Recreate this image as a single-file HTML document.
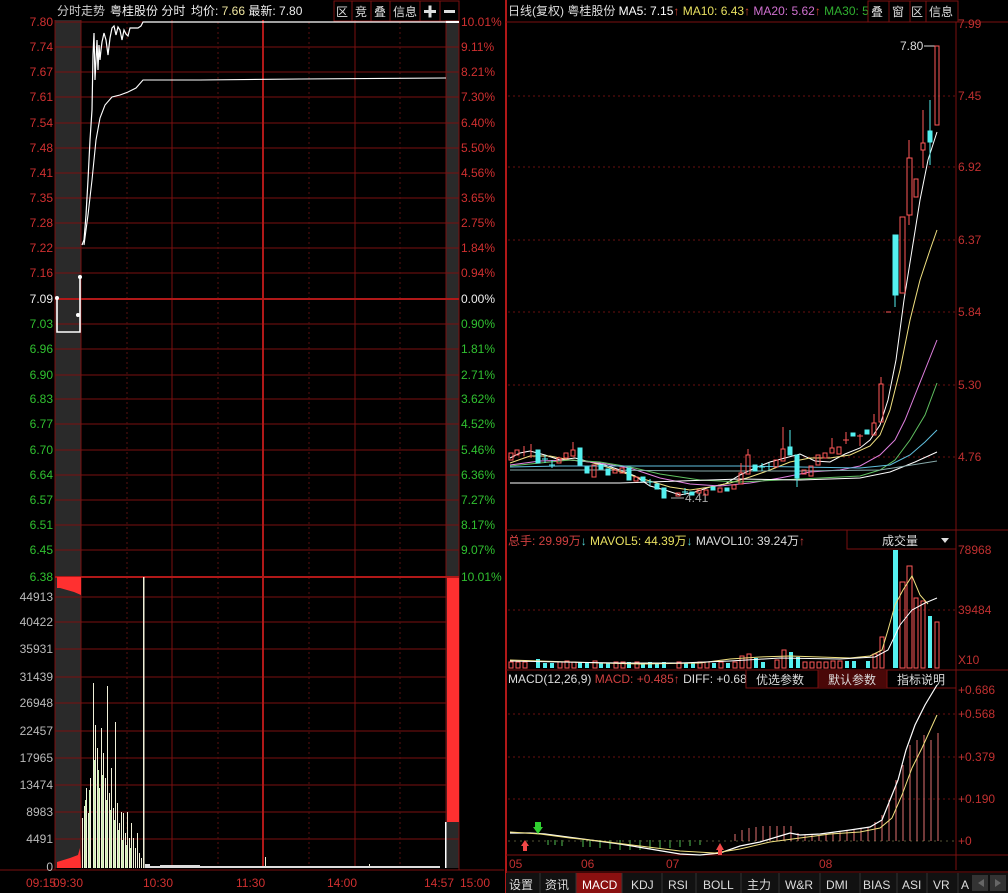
<!DOCTYPE html>
<html><head><meta charset="utf-8"><style>
html,body{margin:0;padding:0;background:#000;width:1008px;height:893px;overflow:hidden}
svg{display:block}
text{font-family:"Liberation Sans","Noto Sans CJK SC",sans-serif;font-size:12px}
</style></head><body>
<svg width="1008" height="893" viewBox="0 0 1008 893" xmlns="http://www.w3.org/2000/svg">
<rect width="1008" height="893" fill="#000"/>
<rect x="55" y="20" width="26" height="848" fill="#2a2a2a"/>
<rect x="446" y="20" width="13" height="848" fill="#2a2a2a"/>
<g stroke="#7a1010" stroke-width="1">
<line x1="55" y1="47" x2="459" y2="47"/><line x1="55" y1="72" x2="459" y2="72"/><line x1="55" y1="97" x2="459" y2="97"/><line x1="55" y1="123" x2="459" y2="123"/><line x1="55" y1="148" x2="459" y2="148"/><line x1="55" y1="173" x2="459" y2="173"/><line x1="55" y1="198" x2="459" y2="198"/><line x1="55" y1="223" x2="459" y2="223"/><line x1="55" y1="248" x2="459" y2="248"/><line x1="55" y1="273" x2="459" y2="273"/>
<line x1="55" y1="324" x2="459" y2="324"/><line x1="55" y1="349" x2="459" y2="349"/><line x1="55" y1="375" x2="459" y2="375"/><line x1="55" y1="399" x2="459" y2="399"/><line x1="55" y1="424" x2="459" y2="424"/><line x1="55" y1="450" x2="459" y2="450"/><line x1="55" y1="475" x2="459" y2="475"/><line x1="55" y1="500" x2="459" y2="500"/><line x1="55" y1="525" x2="459" y2="525"/><line x1="55" y1="550" x2="459" y2="550"/>
<line x1="55" y1="597" x2="459" y2="597"/><line x1="55" y1="622" x2="459" y2="622"/><line x1="55" y1="649" x2="459" y2="649"/><line x1="55" y1="677" x2="459" y2="677"/><line x1="55" y1="703" x2="459" y2="703"/><line x1="55" y1="731" x2="459" y2="731"/><line x1="55" y1="758" x2="459" y2="758"/><line x1="55" y1="785" x2="459" y2="785"/><line x1="55" y1="812" x2="459" y2="812"/><line x1="55" y1="839" x2="459" y2="839"/>
<line x1="81" y1="20" x2="81" y2="868"/><line x1="172" y1="20" x2="172" y2="868"/><line x1="355" y1="20" x2="355" y2="868"/><line x1="446" y1="20" x2="446" y2="868"/>
<line x1="55" y1="20" x2="55" y2="870"/><line x1="459" y1="20" x2="459" y2="870"/>
</g>
<g stroke="#5a1010" stroke-dasharray="2,3"><line x1="127" y1="22" x2="127" y2="868"/><line x1="218" y1="22" x2="218" y2="868"/><line x1="309" y1="22" x2="309" y2="868"/><line x1="400" y1="22" x2="400" y2="868"/></g>
<g stroke="#b01818" stroke-width="2"><line x1="55" y1="299" x2="459" y2="299"/><line x1="55" y1="577" x2="459" y2="577"/><line x1="263" y1="20" x2="263" y2="868"/></g>
<line x1="55" y1="22" x2="459" y2="22" stroke="#7a1010"/>
<line x1="0" y1="870" x2="504" y2="870" stroke="#7a1010"/>
<text x="57" y="15" fill="#ccc" font-size="12.5">分时走势</text>
<text x="110" y="15" fill="#eee" font-size="12.5">粤桂股份 分时</text>
<text x="191" y="15" fill="#eee" font-size="12.5">均价: <tspan fill="#f0e6a0">7.66</tspan> 最新: 7.80</text>
<g stroke="#7a1010" fill="none"><rect x="334" y="1" width="125" height="20"/><line x1="352" y1="1" x2="352" y2="21"/><line x1="371" y1="1" x2="371" y2="21"/><line x1="390" y1="1" x2="390" y2="21"/><line x1="420" y1="1" x2="420" y2="21"/><line x1="440" y1="1" x2="440" y2="21"/></g>
<text x="336" y="16" fill="#ddd" font-size="13">区</text><text x="355" y="16" fill="#ddd" font-size="13">竞</text><text x="374" y="16" fill="#ddd" font-size="13">叠</text><text x="393" y="16" fill="#ddd" font-size="13">信息</text>
<rect x="424" y="10" width="12" height="3" fill="#ddd"/><rect x="428.5" y="5.5" width="3" height="12" fill="#ddd"/><rect x="444" y="10" width="11" height="3" fill="#ddd"/>
<g text-anchor="end" fill="#d03030">
<text x="53" y="26">7.80</text><text x="53" y="51">7.74</text><text x="53" y="76">7.67</text><text x="53" y="101">7.61</text><text x="53" y="127">7.54</text><text x="53" y="152">7.48</text><text x="53" y="177">7.41</text><text x="53" y="202">7.35</text><text x="53" y="227">7.28</text><text x="53" y="252">7.22</text><text x="53" y="277">7.16</text></g>
<text x="53" y="303" text-anchor="end" fill="#eee">7.09</text>
<g text-anchor="end" fill="#30c030">
<text x="53" y="328">7.03</text><text x="53" y="353">6.96</text><text x="53" y="379">6.90</text><text x="53" y="403">6.83</text><text x="53" y="428">6.77</text><text x="53" y="454">6.70</text><text x="53" y="479">6.64</text><text x="53" y="504">6.57</text><text x="53" y="529">6.51</text><text x="53" y="554">6.45</text><text x="53" y="581">6.38</text></g>
<g fill="#d03030"><text x="461" y="26">10.01%</text><text x="461" y="51">9.11%</text><text x="461" y="76">8.21%</text><text x="461" y="101">7.30%</text><text x="461" y="127">6.40%</text><text x="461" y="152">5.50%</text><text x="461" y="177">4.56%</text><text x="461" y="202">3.65%</text><text x="461" y="227">2.75%</text><text x="461" y="252">1.84%</text><text x="461" y="277">0.94%</text></g>
<text x="461" y="303" fill="#eee">0.00%</text>
<g fill="#30c030"><text x="461" y="328">0.90%</text><text x="461" y="353">1.81%</text><text x="461" y="379">2.71%</text><text x="461" y="403">3.62%</text><text x="461" y="428">4.52%</text><text x="461" y="454">5.46%</text><text x="461" y="479">6.36%</text><text x="461" y="504">7.27%</text><text x="461" y="529">8.17%</text><text x="461" y="554">9.07%</text><text x="461" y="581">10.01%</text></g>
<g text-anchor="end" fill="#bbb"><text x="53" y="601">44913</text><text x="53" y="626">40422</text><text x="53" y="653">35931</text><text x="53" y="681">31439</text><text x="53" y="707">26948</text><text x="53" y="735">22457</text><text x="53" y="762">17965</text><text x="53" y="789">13474</text><text x="53" y="816">8983</text><text x="53" y="843">4491</text><text x="53" y="871">0</text></g>
<g fill="#d03030" font-size="12"><text x="26" y="887">09:15</text><text x="53" y="887">09:30</text><text x="143" y="887">10:30</text><text x="236" y="887">11:30</text><text x="327" y="887">14:00</text><text x="424" y="887">14:57</text><text x="460" y="887">15:00</text></g>
<polyline fill="none" stroke="#fff" stroke-width="1.6" points="57,298 57,332 80,332 80,277 78,277"/>
<circle cx="57" cy="298" r="2" fill="#fff"/><circle cx="78" cy="315" r="2" fill="#fff"/><circle cx="80" cy="277" r="2" fill="#fff"/>
<polyline fill="none" stroke="#fff" stroke-width="1.2" points="82,245 84,240 86,215 88,180 90,140 92,110 93,55 94,33 95,80 96,60 97,40 98,70 99,45 100,60 101,50 102,42 104,33 106,40 108,55 110,38 112,28 114,26 116,35 118,27 120,30 122,40 124,30 126,34 128,36 130,28 134,28 138,28 141,26 143,22 446,22"/>
<polyline fill="none" stroke="#fff" stroke-width="1.1" points="84,245 88,215 92,180 96,140 100,118 105,105 112,97 120,95 128,92 136,88 143,80 200,80 300,79 446,78"/>
<rect x="446" y="21" width="13" height="2" fill="#fff"/>
<path d="M57,577 L81,577 L81,595 L74,592 L60,588 L57,588Z" fill="#ff3030"/>
<path d="M57,868 L57,862 L70,858 L78,855 L80,848 L81,868Z" fill="#ff3030"/>
<rect x="447" y="578" width="12" height="244" fill="#ff3030"/>
<rect x="445" y="822" width="1.5" height="46" fill="#fff"/>
<g fill="#f0f0d8">
<rect x="82" y="818" width="1" height="50"/><rect x="84" y="806" width="1" height="62"/><rect x="86" y="788" width="1" height="80"/><rect x="88" y="813" width="1" height="55"/><rect x="90" y="778" width="1" height="90"/><rect x="93" y="683" width="1" height="185"/><rect x="95" y="725" width="1" height="143"/><rect x="97" y="748" width="1" height="120"/><rect x="99" y="788" width="1" height="80"/><rect x="101" y="728" width="1" height="140"/><rect x="103" y="753" width="1" height="115"/><rect x="105" y="778" width="1" height="90"/><rect x="107" y="686" width="1" height="182"/><rect x="109" y="793" width="1" height="75"/><rect x="111" y="768" width="1" height="100"/><rect x="113" y="808" width="1" height="60"/><rect x="115" y="722" width="1" height="146"/><rect x="117" y="803" width="1" height="65"/><rect x="119" y="823" width="1" height="45"/><rect x="121" y="812" width="1" height="56"/><rect x="123" y="813" width="1" height="55"/><rect x="125" y="833" width="1" height="35"/><rect x="127" y="812" width="1" height="56"/><rect x="129" y="838" width="1" height="30"/><rect x="131" y="823" width="1" height="45"/><rect x="133" y="838" width="1" height="30"/><rect x="135" y="848" width="1" height="20"/><rect x="137" y="833" width="1" height="35"/><rect x="139" y="853" width="1" height="15"/><rect x="141" y="858" width="1" height="10"/><rect x="143" y="577" width="1.5" height="291"/>
<rect x="265" y="857" width="1" height="11"/><rect x="369" y="864" width="1" height="4"/>
</g>
<g fill="#c8f0b0"><rect x="85" y="800" width="1" height="68"/><rect x="89" y="790" width="1" height="78"/><rect x="94" y="760" width="1" height="108"/><rect x="98" y="770" width="1" height="98"/><rect x="102" y="775" width="1" height="93"/><rect x="106" y="800" width="1" height="68"/><rect x="110" y="810" width="1" height="58"/><rect x="114" y="820" width="1" height="48"/><rect x="118" y="830" width="1" height="38"/><rect x="122" y="840" width="1" height="28"/><rect x="126" y="845" width="1" height="23"/><rect x="130" y="848" width="1" height="20"/></g>
<path d="M145,868 V864 H150 V866 H160 V865 H200 V866 H260 V866 H300 V866 H440 V868 Z" fill="#ddd"/>
<line x1="506" y1="0" x2="506" y2="893" stroke="#b01818" stroke-width="2"/>
<line x1="956" y1="22" x2="956" y2="870" stroke="#7a1010"/>
<line x1="506" y1="22" x2="1008" y2="22" stroke="#7a1010"/>
<g stroke="#6a1010" stroke-dasharray="2,3"><line x1="508" y1="96" x2="956" y2="96"/><line x1="508" y1="167" x2="956" y2="167"/><line x1="508" y1="240" x2="956" y2="240"/><line x1="508" y1="312" x2="956" y2="312"/><line x1="508" y1="385" x2="956" y2="385"/><line x1="508" y1="457" x2="956" y2="457"/><line x1="508" y1="610" x2="956" y2="610"/><line x1="508" y1="714" x2="956" y2="714"/><line x1="508" y1="757" x2="956" y2="757"/><line x1="508" y1="799" x2="956" y2="799"/></g>
<g stroke="#7a1010"><line x1="506" y1="530" x2="1008" y2="530"/><line x1="506" y1="670" x2="1008" y2="670"/><line x1="506" y1="855" x2="1008" y2="855"/><line x1="506" y1="872" x2="1008" y2="872"/></g>
<text x="508" y="15" fill="#ddd" font-size="12.5">日线(复权) 粤桂股份 <tspan fill="#fff">MA5: 7.15</tspan><tspan fill="#d04030">↑</tspan><tspan fill="#e8e060"> MA10: 6.43</tspan><tspan fill="#d04030">↑</tspan><tspan fill="#d070d0"> MA20: 5.62</tspan><tspan fill="#d04030">↑</tspan><tspan fill="#30b030"> MA30: 5</tspan></text>
<g stroke="#7a1010" fill="none"><rect x="868" y="1" width="90" height="21"/><line x1="889" y1="1" x2="889" y2="22"/><line x1="910" y1="1" x2="910" y2="22"/><line x1="926" y1="1" x2="926" y2="22"/></g>
<rect x="866" y="0" width="92" height="22" fill="#000" opacity="0"/>
<text x="871" y="16" fill="#ddd" font-size="13">叠</text><text x="892" y="16" fill="#ddd" font-size="13">窗</text><text x="911" y="16" fill="#ddd" font-size="13">区</text><text x="929" y="16" fill="#ddd" font-size="13">信息</text>
<g fill="#c03030"><text x="958" y="28">7.99</text><text x="958" y="100">7.45</text><text x="958" y="171">6.92</text><text x="958" y="244">6.37</text><text x="958" y="316">5.84</text><text x="958" y="389">5.30</text><text x="958" y="461">4.76</text><text x="958" y="554">78968</text><text x="958" y="614">39484</text><text x="958" y="664">X10</text><text x="958" y="694">+0.686</text><text x="958" y="718">+0.568</text><text x="958" y="761">+0.379</text><text x="958" y="803">+0.190</text><text x="958" y="845">+0</text></g>
<text x="900" y="50" fill="#ddd">7.80</text><line x1="924" y1="46" x2="937" y2="46" stroke="#ddd"/>
<text x="685" y="502" fill="#aaa">4.41</text><line x1="671" y1="498" x2="684" y2="498" stroke="#aaa"/>
<g fill="none" stroke-width="1">
<polyline stroke="#fff" points="510,458 520,453 530,451 545,455 560,460 575,458 590,462 605,465 620,470 635,476 650,486 665,490 680,495 695,492 710,487 725,484 740,475 755,468 770,462 785,458 800,454 815,461 830,462 845,454 860,448 870,440 880,425 888,400 896,360 904,300 912,250 920,200 928,160 937,132"/>
<polyline stroke="#f0e080" points="510,463 530,456 550,456 570,460 590,462 610,468 630,475 650,481 670,487 690,490 710,487 730,483 750,477 770,470 790,462 810,458 830,458 850,455 870,446 880,435 890,410 900,370 910,320 920,280 930,250 937,230"/>
<polyline stroke="#e080e0" points="510,465 540,461 570,460 600,463 630,468 660,478 690,484 720,486 750,483 780,478 810,472 840,470 860,466 880,455 895,440 905,420 915,395 925,370 937,340"/>
<polyline stroke="#60c060" points="510,466 540,463 570,460 600,462 630,467 660,474 700,480 740,482 780,480 820,478 860,476 880,470 895,460 910,440 925,415 937,383"/>
<polyline stroke="#60c0e0" points="510,467 560,466 620,466 680,466 740,466 800,467 860,468 890,465 910,455 925,442 937,430"/>
<polyline stroke="#fff" points="510,483 560,483 620,483 680,481 740,479 800,480 860,478 890,472 915,462 937,452"/>
<polyline stroke="#8aa" points="510,470 600,470 700,471 800,471 880,470 937,461"/>
</g>
<g fill="none" stroke="#ff5858" stroke-width="1">
<rect x="509" y="453" width="4" height="7"/><rect x="515" y="450" width="4" height="5"/><line x1="524" y1="446" x2="524" y2="456"/><line x1="531" y1="444" x2="531" y2="458"/>
<rect x="557" y="458" width="4" height="5"/><rect x="564" y="453" width="4" height="5"/><rect x="571" y="450" width="4" height="6"/><line x1="573" y1="442" x2="573" y2="450"/>
<rect x="592" y="465" width="4" height="12"/><rect x="613" y="470" width="4" height="3"/><rect x="620" y="468" width="4" height="5"/><rect x="634" y="477" width="4" height="4"/>
<rect x="676" y="493" width="4" height="3"/><rect x="697" y="490" width="4" height="3"/><rect x="704" y="490" width="4" height="5"/><rect x="718" y="488" width="4" height="4"/><rect x="732" y="485" width="4" height="4"/>
<rect x="739" y="473" width="4" height="11"/><line x1="741" y1="463" x2="741" y2="473"/><rect x="746" y="455" width="4" height="19"/><line x1="748" y1="449" x2="748" y2="455"/>
<rect x="774" y="460" width="4" height="7"/><rect x="781" y="449" width="4" height="12"/><line x1="783" y1="427" x2="783" y2="449"/>
<rect x="802" y="470" width="4" height="4"/><rect x="809" y="466" width="4" height="10"/><rect x="816" y="455" width="4" height="10"/><rect x="823" y="453" width="4" height="5"/><rect x="830" y="448" width="4" height="5"/><line x1="832" y1="438" x2="832" y2="448"/><rect x="837" y="447" width="4" height="7"/>
<line x1="846" y1="432" x2="846" y2="444"/><line x1="843" y1="440" x2="849" y2="440"/><line x1="860" y1="434" x2="860" y2="446"/><line x1="857" y1="436" x2="863" y2="436"/>
<rect x="872" y="423" width="4" height="12"/><line x1="874" y1="414" x2="874" y2="423"/>
<rect x="879" y="384" width="4" height="38"/><line x1="881" y1="377" x2="881" y2="384"/>
<line x1="886" y1="312" x2="891" y2="312"/>
<rect x="900" y="217" width="5" height="76"/>
<rect x="907" y="158" width="5" height="57"/><line x1="909" y1="140" x2="909" y2="158"/><line x1="909" y1="215" x2="909" y2="225"/>
<rect x="914" y="179" width="4" height="18"/>
<rect x="921" y="143" width="4" height="7"/><line x1="923" y1="110" x2="923" y2="143"/><line x1="923" y1="150" x2="923" y2="168"/>
<rect x="935" y="46" width="4" height="79"/>
</g>
<g fill="#54f0f0" stroke="#54f0f0">
<rect x="536" y="450" width="4" height="13"/><line x1="545" y1="455" x2="545" y2="463"/><line x1="542" y1="459" x2="548" y2="459"/><line x1="552" y1="460" x2="552" y2="468"/><line x1="549" y1="465" x2="555" y2="465"/>
<rect x="578" y="448" width="4" height="17"/><rect x="585" y="467" width="4" height="6"/><rect x="599" y="465" width="4" height="4"/><rect x="606" y="469" width="4" height="6"/>
<rect x="627" y="468" width="4" height="12"/><rect x="641" y="477" width="4" height="4"/><line x1="650" y1="479" x2="650" y2="486"/><line x1="647" y1="482" x2="653" y2="482"/><rect x="655" y="484" width="4" height="5"/><rect x="662" y="488" width="4" height="10"/>
<line x1="685" y1="488" x2="685" y2="495"/><line x1="682" y1="492" x2="688" y2="492"/><rect x="690" y="492" width="4" height="3"/><rect x="711" y="487" width="4" height="3"/><rect x="725" y="488" width="4" height="3"/>
<rect x="753" y="465" width="4" height="6"/><line x1="762" y1="463" x2="762" y2="471"/><line x1="759" y1="467" x2="765" y2="467"/><line x1="769" y1="463" x2="769" y2="470"/>
<rect x="788" y="447" width="4" height="8"/><line x1="790" y1="430" x2="790" y2="447"/><rect x="795" y="455" width="4" height="23"/><line x1="797" y1="478" x2="797" y2="487"/>
<rect x="851" y="433" width="4" height="3"/><rect x="865" y="430" width="4" height="4"/>
<rect x="893" y="235" width="5" height="60"/><line x1="895" y1="295" x2="895" y2="307"/>
<rect x="928" y="131" width="4" height="11"/><line x1="930" y1="100" x2="930" y2="131"/><line x1="930" y1="142" x2="930" y2="165"/>
</g>
<text x="508" y="545" fill="#d04040" font-size="12">总手: 29.99万<tspan fill="#50d0d0">↓</tspan><tspan fill="#e8e060"> MAVOL5: 44.39万</tspan><tspan fill="#50d0d0">↓</tspan><tspan fill="#ddd"> MAVOL10: 39.24万</tspan><tspan fill="#d04040">↑</tspan></text>
<rect x="847" y="530" width="109" height="19" fill="#000" stroke="#7a1010"/>
<text x="882" y="545" fill="#ddd" font-size="12.5">成交量</text><path d="M941,538 L949,538 L945,543Z" fill="#ddd"/>
<g fill="none" stroke="#ff5858">
<rect x="509" y="662" width="4" height="6"/><rect x="516" y="662" width="4" height="6"/><rect x="523" y="662" width="4" height="6"/><rect x="558" y="662" width="4" height="6"/><rect x="565" y="661" width="4" height="7"/><rect x="572" y="662" width="4" height="6"/><rect x="593" y="661" width="4" height="7"/><rect x="614" y="662" width="4" height="6"/><rect x="621" y="662" width="4" height="6"/><rect x="635" y="662" width="4" height="6"/><rect x="677" y="662" width="4" height="6"/><rect x="698" y="662" width="4" height="6"/><rect x="705" y="662" width="4" height="6"/><rect x="719" y="662" width="4" height="6"/><rect x="733" y="662" width="4" height="6"/><rect x="740" y="656" width="4" height="12"/><rect x="747" y="654" width="4" height="14"/><rect x="775" y="660" width="4" height="8"/><rect x="782" y="650" width="4" height="18"/><rect x="803" y="662" width="4" height="6"/><rect x="810" y="662" width="4" height="6"/><rect x="817" y="662" width="4" height="6"/><rect x="824" y="662" width="4" height="6"/><rect x="831" y="661" width="4" height="7"/><rect x="838" y="661" width="4" height="7"/><rect x="873" y="654" width="4" height="14"/><rect x="880" y="637" width="4" height="31"/><rect x="900" y="582" width="5" height="86"/><rect x="907" y="566" width="5" height="102"/><rect x="914" y="598" width="4" height="70"/><rect x="921" y="601" width="4" height="67"/><rect x="935" y="622" width="4" height="46"/></g>
<g fill="#54f0f0"><rect x="536" y="659" width="4" height="9"/><rect x="543" y="663" width="4" height="5"/><rect x="550" y="663" width="4" height="5"/><rect x="578" y="662" width="4" height="6"/><rect x="585" y="663" width="4" height="5"/><rect x="599" y="663" width="4" height="5"/><rect x="606" y="663" width="4" height="5"/><rect x="627" y="662" width="4" height="6"/><rect x="641" y="663" width="4" height="5"/><rect x="648" y="662" width="4" height="6"/><rect x="655" y="663" width="4" height="5"/><rect x="662" y="662" width="4" height="6"/><rect x="684" y="663" width="4" height="5"/><rect x="691" y="663" width="4" height="5"/><rect x="712" y="663" width="4" height="5"/><rect x="726" y="663" width="4" height="5"/><rect x="754" y="658" width="4" height="10"/><rect x="761" y="662" width="4" height="6"/><rect x="789" y="652" width="4" height="16"/><rect x="796" y="657" width="4" height="11"/><rect x="845" y="661" width="4" height="7"/><rect x="852" y="661" width="4" height="7"/><rect x="866" y="661" width="4" height="7"/><rect x="893" y="550" width="5" height="118"/><rect x="928" y="616" width="4" height="52"/></g>
<polyline fill="none" stroke="#f0e080" points="510,660 540,661 570,662 600,663 640,664 700,663 730,659 760,657 790,656 820,657 850,658 870,656 882,650 888,630 895,605 903,590 912,576 920,595 928,604"/>
<polyline fill="none" stroke="#fff" points="510,661 560,662 620,663 680,663 730,661 780,658 840,659 875,657 888,650 900,625 912,610 925,603 937,598"/>
<text x="508" y="683" fill="#ddd" font-size="12">MACD(12,26,9) <tspan fill="#d04040">MACD: +0.485↑</tspan> DIFF: +0.68</text>
<rect x="746" y="670" width="210" height="18" fill="#000" stroke="#7a1010"/>
<rect x="818" y="670" width="69" height="18" fill="#4a0808"/>
<line x1="818" y1="670" x2="818" y2="688" stroke="#7a1010"/><line x1="887" y1="670" x2="887" y2="688" stroke="#7a1010"/>
<text x="756" y="684" fill="#ddd" font-size="12.5">优选参数</text><text x="828" y="684" fill="#ddd" font-size="12.5">默认参数</text><text x="897" y="684" fill="#ddd" font-size="12.5">指标说明</text>
<g stroke="#50c050"><line x1="548" y1="840" x2="548" y2="845"/><line x1="555" y1="840" x2="555" y2="845"/><line x1="562" y1="840" x2="562" y2="846"/><line x1="583" y1="840" x2="583" y2="847"/><line x1="590" y1="840" x2="590" y2="847"/><line x1="600" y1="840" x2="600" y2="848"/><line x1="610" y1="840" x2="610" y2="849"/><line x1="620" y1="840" x2="620" y2="850"/><line x1="630" y1="840" x2="630" y2="850"/><line x1="640" y1="840" x2="640" y2="850"/><line x1="650" y1="840" x2="650" y2="849"/><line x1="660" y1="840" x2="660" y2="849"/><line x1="670" y1="840" x2="670" y2="848"/><line x1="680" y1="840" x2="680" y2="847"/><line x1="690" y1="840" x2="690" y2="846"/><line x1="700" y1="840" x2="700" y2="845"/></g>
<line x1="508" y1="841" x2="956" y2="841" stroke="#553" stroke-dasharray="2,4"/>
<g stroke="#e07070"><line x1="735" y1="841" x2="735" y2="834"/><line x1="742" y1="841" x2="742" y2="830"/><line x1="749" y1="841" x2="749" y2="828"/><line x1="756" y1="841" x2="756" y2="827"/><line x1="763" y1="841" x2="763" y2="826"/><line x1="770" y1="841" x2="770" y2="826"/><line x1="777" y1="841" x2="777" y2="826"/><line x1="784" y1="841" x2="784" y2="826"/><line x1="791" y1="841" x2="791" y2="826"/><line x1="798" y1="841" x2="798" y2="833"/><line x1="805" y1="841" x2="805" y2="835"/><line x1="812" y1="841" x2="812" y2="835"/><line x1="819" y1="841" x2="819" y2="835"/><line x1="826" y1="841" x2="826" y2="834"/><line x1="833" y1="841" x2="833" y2="833"/><line x1="840" y1="841" x2="840" y2="832"/><line x1="847" y1="841" x2="847" y2="831"/><line x1="854" y1="841" x2="854" y2="830"/><line x1="861" y1="841" x2="861" y2="829"/><line x1="868" y1="841" x2="868" y2="827"/><line x1="875" y1="841" x2="875" y2="822"/><line x1="882" y1="841" x2="882" y2="815"/><line x1="889" y1="841" x2="889" y2="800"/><line x1="896" y1="841" x2="896" y2="780"/><line x1="903" y1="841" x2="903" y2="765"/><line x1="910" y1="841" x2="910" y2="745"/><line x1="917" y1="841" x2="917" y2="740"/><line x1="924" y1="841" x2="924" y2="735"/><line x1="931" y1="841" x2="931" y2="740"/><line x1="938" y1="841" x2="938" y2="733"/></g>
<polyline fill="none" stroke="#fff" stroke-width="1.2" points="510,833 530,833 545,834 560,836 590,840 620,844 650,849 680,854 700,855 720,853 740,846 760,842 780,836 790,833 800,835 820,834 850,830 870,827 882,820 890,800 898,780 906,750 915,725 925,705 937,685"/>
<polyline fill="none" stroke="#f0e080" stroke-width="1" points="510,832 540,834 570,838 600,841 640,846 680,851 715,853 740,849 770,842 800,838 830,834 860,832 880,828 892,818 902,795 912,768 922,748 937,715"/>
<path d="M521,846 l4,-6 l4,6 h-2 v5 h-4 v-5z" fill="#f04848"/>
<path d="M535,822 h6 v5 h2 l-5,7 l-5,-7 h2z" fill="#30d030"/>
<path d="M716,850 l4,-7 l4,7 h-2 v5 h-4 v-5z" fill="#f04848"/>
<g fill="#c03030"><text x="509" y="868">05</text><text x="581" y="868">06</text><text x="666" y="868">07</text><text x="819" y="868">08</text></g>
<rect x="506" y="873" width="502" height="20" fill="#111"/>
<rect x="576" y="873" width="46" height="20" fill="#8a1010"/>
<g stroke="#333"><line x1="540" y1="873" x2="540" y2="893"/><line x1="576" y1="873" x2="576" y2="893"/><line x1="622" y1="873" x2="622" y2="893"/><line x1="662" y1="873" x2="662" y2="893"/><line x1="696" y1="873" x2="696" y2="893"/><line x1="741" y1="873" x2="741" y2="893"/><line x1="779" y1="873" x2="779" y2="893"/><line x1="820" y1="873" x2="820" y2="893"/><line x1="860" y1="873" x2="860" y2="893"/><line x1="897" y1="873" x2="897" y2="893"/><line x1="927" y1="873" x2="927" y2="893"/><line x1="958" y1="873" x2="958" y2="893"/></g>
<g fill="#ddd" font-size="13"><text x="509" y="889">设置</text><text x="545" y="889">资讯</text><text x="582" y="889" fill="#fff">MACD</text><text x="631" y="889">KDJ</text><text x="668" y="889">RSI</text><text x="703" y="889">BOLL</text><text x="747" y="889">主力</text><text x="785" y="889">W&amp;R</text><text x="826" y="889">DMI</text><text x="863" y="889">BIAS</text><text x="902" y="889">ASI</text><text x="933" y="889">VR</text><text x="961" y="889">A</text></g>
<rect x="972" y="875" width="16" height="16" fill="#333"/><rect x="990" y="875" width="16" height="16" fill="#333"/>
<path d="M984,879 l-6,4 l6,4z" fill="#666"/><path d="M995,879 l6,4 l-6,4z" fill="#666"/>
</svg>
</body></html>
